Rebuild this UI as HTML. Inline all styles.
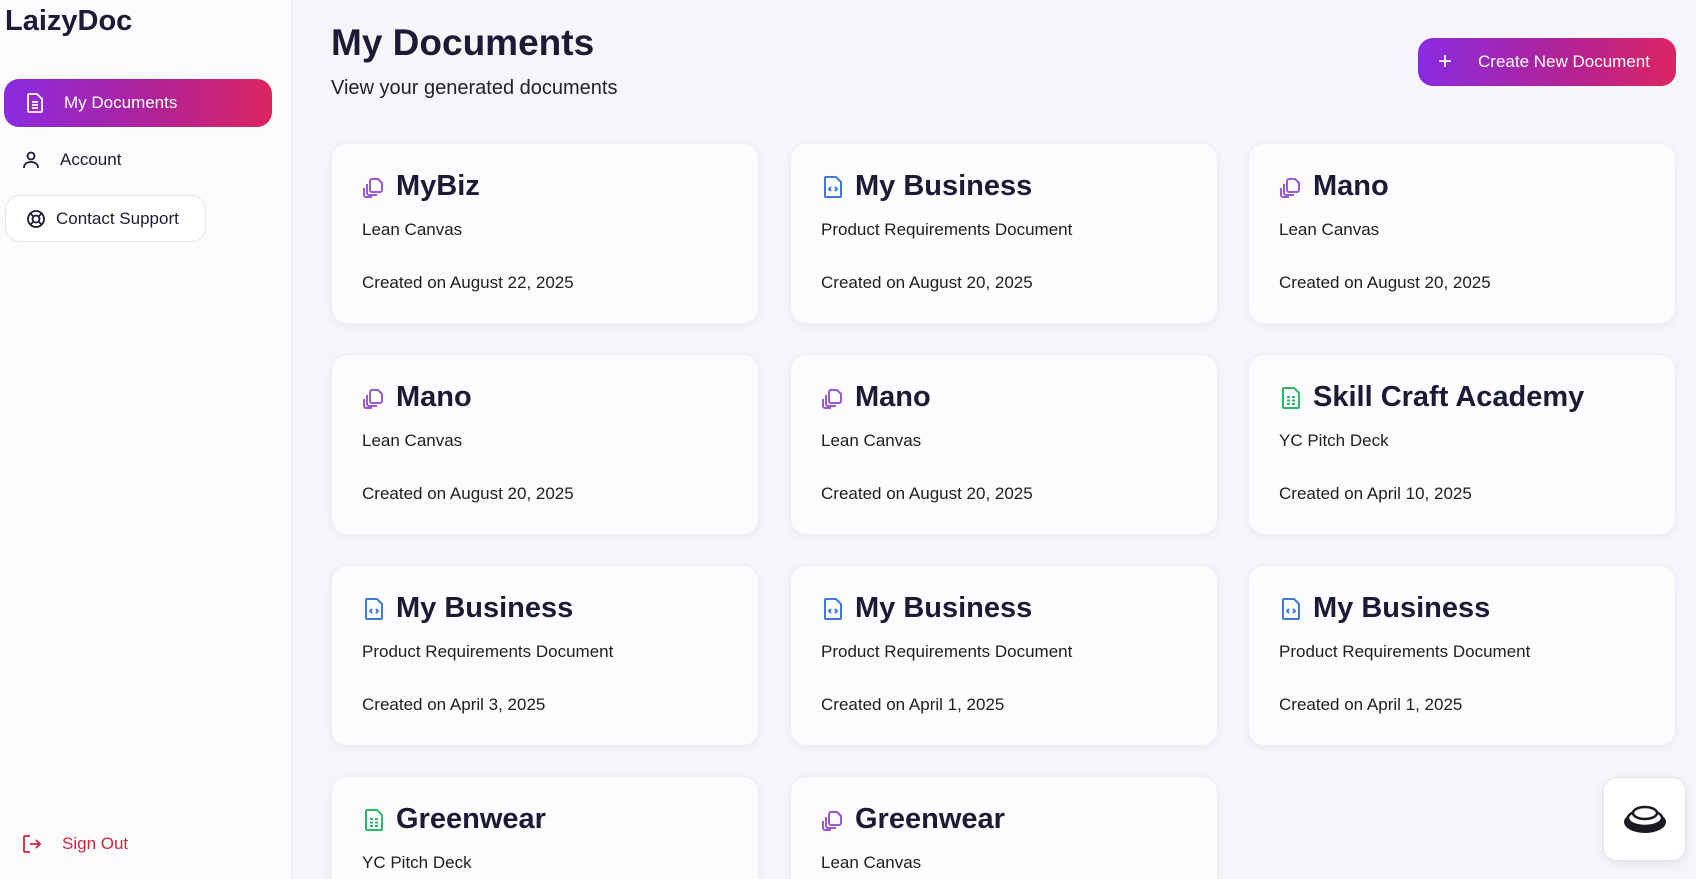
<!DOCTYPE html>
<html><head><meta charset="utf-8"><style>
*{box-sizing:border-box;margin:0;padding:0}
html{width:1696px;height:879px;overflow:hidden}
body{width:1696px;height:879px;overflow:hidden;background:#f6f5fa;font-family:"Liberation Sans",sans-serif;color:#1c1b33;position:relative}
.side{position:absolute;left:0;top:0;width:292px;height:879px;background:#fbfbfd;border-right:1px solid #ecebf1}
.logo{position:absolute;left:5px;top:5px;font-size:29px;font-weight:bold;color:#1c1b36}
.nav{position:absolute;display:flex;align-items:center;font-size:17px;color:#1c1b33}
.nav svg{margin-right:20px}
.active{left:4px;top:79px;width:268px;height:48px;border-radius:15px;background:linear-gradient(90deg,#8a2be2,#b02398 55%,#dc2461);color:#fff;padding-left:22px}
.acc{left:22px;top:148px;height:24px}
.sup{left:5px;top:195px;width:201px;height:47px;border:1px solid #e6e5ec;border-radius:15px;background:#fff;padding-left:20px}
.sup svg{margin-right:10px}
.signout{left:22px;top:834px;color:#d0243c}
h1{position:absolute;left:331px;top:22px;font-size:37px;font-weight:bold;color:#1c1b36}
.subt{position:absolute;left:331px;top:77px;font-size:20px;color:#222}
.btn{position:absolute;left:1418px;top:38px;width:258px;height:48px;border-radius:15px;background:linear-gradient(90deg,#8a2be2,#b02398 55%,#dc2461);color:#fff;font-size:17px;display:flex;align-items:center;padding-left:20px}
.btn span.p{font-size:24px;margin-right:26px;font-weight:300}
.card{position:absolute;width:428px;height:181px;background:#fcfcfe;border:1px solid #efeef4;border-radius:16px;box-shadow:0 2px 8px rgba(60,50,110,.06)}
.card .t{position:absolute;left:30px;top:26px;display:flex;align-items:center;font-size:29px;font-weight:bold;color:#1c1b36}
.card .t svg{margin-right:10px}
.card .s{position:absolute;left:30px;top:76px;font-size:17px;color:#1e1e1e}
.card .d{position:absolute;left:30px;top:129px;font-size:17px;color:#1e1e1e}
.widget{position:absolute;left:1603px;top:777px;width:83px;height:84px;background:#fff;border:1px solid #e4e4ea;border-radius:14px;box-shadow:0 3px 10px rgba(0,0,0,.08);display:flex;align-items:center;justify-content:center}
</style></head><body>
<div class="side">
<div class="logo">LaizyDoc</div>
<div class="nav active"><svg width="18" height="20" viewBox="0 0 18 20" fill="none" stroke="#fff" stroke-width="1.8"><path d="M3 1h8l5 5v12a1 1 0 0 1-1 1H3a1 1 0 0 1-1-1V2a1 1 0 0 1 1-1z"/><path d="M6 9h6M6 12h6M6 15h6"/></svg>My Documents</div>
<div class="nav acc"><svg width="18" height="20" viewBox="0 0 18 20" fill="none" stroke="#1c1b33" stroke-width="1.8"><circle cx="9" cy="6" r="3.5"/><path d="M2 18c0-4 3-6 7-6s7 2 7 6"/></svg>Account</div>
<div class="nav sup"><svg width="20" height="20" viewBox="0 0 20 20" fill="none" stroke="#1c1b33" stroke-width="1.8"><circle cx="10" cy="10" r="8"/><circle cx="10" cy="10" r="3.5"/><path d="M4.5 4.5l3 3M15.5 4.5l-3 3M4.5 15.5l3-3M15.5 15.5l-3-3"/></svg>Contact Support</div>
<div class="nav signout"><svg width="20" height="18" viewBox="0 0 20 18" fill="none" stroke="#d0243c" stroke-width="1.8"><path d="M8 1H3a1 1 0 0 0-1 1v14a1 1 0 0 0 1 1h5M8 9h10M14 5l4 4-4 4"/></svg>Sign Out</div>
</div>
<h1>My Documents</h1>
<div class="subt">View your generated documents</div>
<div class="btn"><span class="p">+</span>Create New Document</div>

<svg width="0" height="0" style="position:absolute"><defs>
<symbol id="cp" viewBox="0 0 24 24"><g fill="none" stroke="#9b59d0" stroke-width="2" stroke-linejoin="round"><path d="M10 4h6l4 4v7a2 2 0 0 1-2 2h-8a2 2 0 0 1-2-2V6a2 2 0 0 1 2-2z"/><path d="M5 9v9a2 2 0 0 0 2 2h8"/><path d="M2 13v7a2 2 0 0 0 2 2h6"/></g></symbol>
<symbol id="pr" viewBox="0 0 24 24"><g fill="none" stroke="#3f7ad8" stroke-width="2" stroke-linejoin="round"><path d="M5 2h10l5 5v14a1 1 0 0 1-1 1H5a1 1 0 0 1-1-1V3a1 1 0 0 1 1-1z"/><path d="M10 12l-2 2 2 2M14 12l2 2-2 2"/></g></symbol>
<symbol id="yc" viewBox="0 0 24 24"><g fill="none" stroke="#2fb768" stroke-width="2" stroke-linejoin="round"><path d="M5 2h10l5 5v14a1 1 0 0 1-1 1H5a1 1 0 0 1-1-1V3a1 1 0 0 1 1-1z"/><path d="M8 11h3M13 11h3M8 14.5h3M13 14.5h3M8 18h3M13 18h3"/></g></symbol>
</defs></svg>

<div class="card" style="left:331px;top:143px"><div class="t"><svg width="24" height="24"><use href="#cp"/></svg>MyBiz</div><div class="s">Lean Canvas</div><div class="d">Created on August 22, 2025</div></div>
<div class="card" style="left:790px;top:143px"><div class="t"><svg width="24" height="24"><use href="#pr"/></svg>My Business</div><div class="s">Product Requirements Document</div><div class="d">Created on August 20, 2025</div></div>
<div class="card" style="left:1248px;top:143px"><div class="t"><svg width="24" height="24"><use href="#cp"/></svg>Mano</div><div class="s">Lean Canvas</div><div class="d">Created on August 20, 2025</div></div>

<div class="card" style="left:331px;top:354px"><div class="t"><svg width="24" height="24"><use href="#cp"/></svg>Mano</div><div class="s">Lean Canvas</div><div class="d">Created on August 20, 2025</div></div>
<div class="card" style="left:790px;top:354px"><div class="t"><svg width="24" height="24"><use href="#cp"/></svg>Mano</div><div class="s">Lean Canvas</div><div class="d">Created on August 20, 2025</div></div>
<div class="card" style="left:1248px;top:354px"><div class="t"><svg width="24" height="24"><use href="#yc"/></svg>Skill Craft Academy</div><div class="s">YC Pitch Deck</div><div class="d">Created on April 10, 2025</div></div>

<div class="card" style="left:331px;top:565px"><div class="t"><svg width="24" height="24"><use href="#pr"/></svg>My Business</div><div class="s">Product Requirements Document</div><div class="d">Created on April 3, 2025</div></div>
<div class="card" style="left:790px;top:565px"><div class="t"><svg width="24" height="24"><use href="#pr"/></svg>My Business</div><div class="s">Product Requirements Document</div><div class="d">Created on April 1, 2025</div></div>
<div class="card" style="left:1248px;top:565px"><div class="t"><svg width="24" height="24"><use href="#pr"/></svg>My Business</div><div class="s">Product Requirements Document</div><div class="d">Created on April 1, 2025</div></div>

<div class="card" style="left:331px;top:776px;height:120px"><div class="t"><svg width="24" height="24"><use href="#yc"/></svg>Greenwear</div><div class="s">YC Pitch Deck</div></div>
<div class="card" style="left:790px;top:776px;height:120px"><div class="t"><svg width="24" height="24"><use href="#cp"/></svg>Greenwear</div><div class="s">Lean Canvas</div></div>

<div class="widget"><svg width="46" height="34" viewBox="0 0 46 34"><ellipse cx="23" cy="20" rx="21" ry="11" fill="#1a1a22"/><ellipse cx="23" cy="16" rx="17" ry="8" fill="#fff" stroke="#1a1a22" stroke-width="2.5"/><ellipse cx="23" cy="11" rx="12" ry="6" fill="#fff" stroke="#1a1a22" stroke-width="2.5"/></svg></div>
</body></html>
